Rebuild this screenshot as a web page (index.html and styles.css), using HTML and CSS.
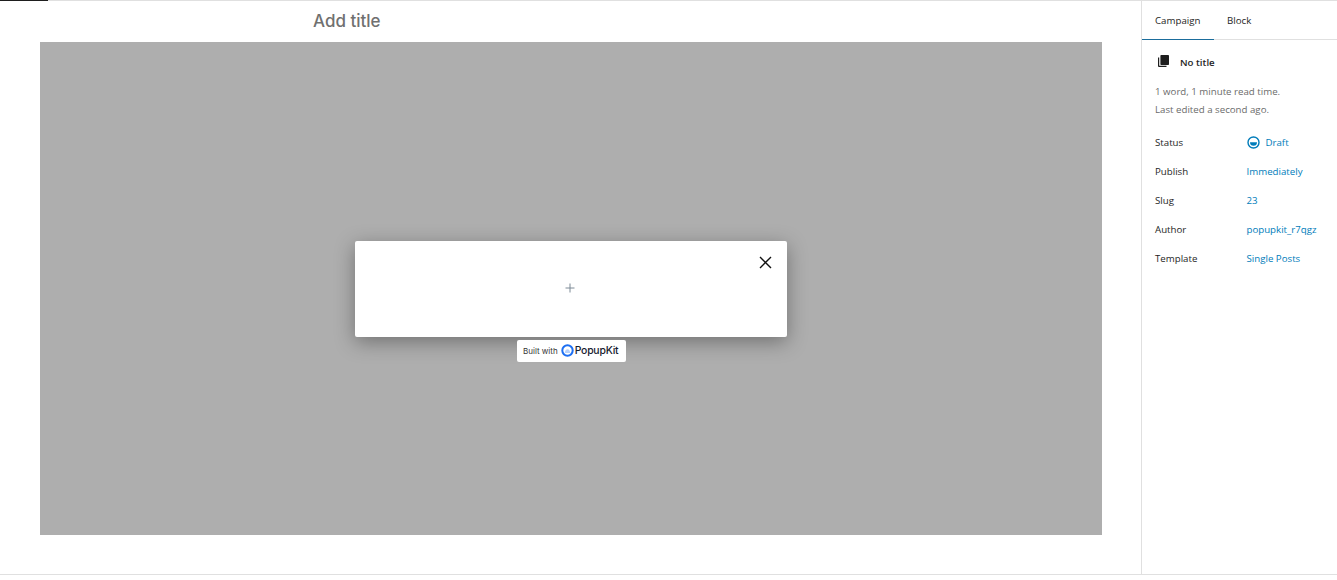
FILE: index.html
```html
<!DOCTYPE html>
<html lang="en">
<head>
<meta charset="utf-8">
<title>Campaign editor</title>
<link rel="stylesheet" href="styles.css">
</head>
<body>
<div class="app">
  <div class="progress"></div>
  <div class="workspace">
    <main class="editor">
      <h1 class="title">Add title</h1>
      <div class="overlay">
        <div class="modal">
          <svg class="close" width="13" height="13" viewBox="0 0 13 13"><path d="M1 1l11 11M12 1L1 12" fill="none" stroke="#111" stroke-width="1.4"/></svg>
          <svg class="plus" width="10" height="10" viewBox="0 0 10 10"><path d="M5 .5v9M.5 5h9" fill="none" stroke="#7d8a96" stroke-width="1"/></svg>
          <div class="badge">
            <span class="built">Built with</span>
            <svg class="logo" width="13" height="13" viewBox="0 0 13 13"><circle cx="6.5" cy="6.5" r="5.2" fill="#fff" stroke="#1d6ff2" stroke-width="2"/><path d="M3.8 9c.1-2 1.2-3.7 2.7-3.7s2.6 1.7 2.7 3.7z" fill="#b5d0fb"/></svg>
            <span class="brand">PopupKit</span>
          </div>
        </div>
      </div>
    </main>
    <aside class="sidebar">
      <nav class="tabs">
        <span class="tab active">Campaign</span>
        <span class="tab">Block</span>
      </nav>
      <div class="panel">
        <div class="doc">
          <svg width="14" height="14" viewBox="0 0 14 14"><path d="M1 3.5h1.2v8.3h7.3V13H2a1 1 0 0 1-1-1z" fill="#1e1e1e"/><rect x="3.4" y="1" width="8.6" height="10" rx=".8" fill="#1e1e1e"/></svg>
          <strong>No title</strong>
        </div>
        <p class="meta">1 word, 1 minute read time.</p>
        <p class="meta">Last edited a second ago.</p>
        <dl class="rows">
          <div class="row"><dt>Status</dt><dd class="status"><svg width="13" height="13" viewBox="0 0 13 13"><circle cx="6.5" cy="6.5" r="5.5" fill="none" stroke="#007cba" stroke-width="1.4"/><path d="M3 6.2h7a3.5 3.5 0 0 1-7 0z" fill="#007cba"/></svg>Draft</dd></div>
          <div class="row"><dt>Publish</dt><dd>Immediately</dd></div>
          <div class="row"><dt>Slug</dt><dd>23</dd></div>
          <div class="row"><dt>Author</dt><dd>popupkit_r7qgz</dd></div>
          <div class="row"><dt>Template</dt><dd>Single Posts</dd></div>
        </dl>
      </div>
    </aside>
  </div>
</div>
</body>
</html>
```
FILE: styles.css
```css
* { box-sizing: border-box; }
html, body { margin: 0; height: 100%; overflow: hidden; background: #fff; }
body { font-family: "Open Sans", "Noto Sans", sans-serif; font-size: 9.7px; color: #1e1e1e; }
.app { height: 575px; display: flex; flex-direction: column; border-bottom: 1px solid #e0e0e0; }
.progress { height: 1px; flex: none; background: linear-gradient(to right, #1e1e1e 48px, #e0e0e0 48px); }
.workspace { flex: 1; display: flex; min-height: 0; }
.editor { width: 1141px; flex: none; display: flex; flex-direction: column; padding: 0 39px 0 40px; }
.title { margin: 9px 0 0 273px; height: 32px; font: 500 17px/22px Inter, sans-serif; color: #707070; }
.overlay { height: 493px; flex: none; background: #aeaeae; display: flex; align-items: center; justify-content: center; }
.modal { position: relative; width: 432px; height: 96px; background: #fff; border-radius: 2px; box-shadow: 0 5px 20px rgba(0,0,0,.35); display: flex; align-items: center; justify-content: center; }
.close { position: absolute; top: 15px; right: 15px; }
.plus { margin: 0 2px 2px 0; }
.badge { position: absolute; top: 99px; left: 162px; width: 109px; height: 22px; background: #fff; border-radius: 2px; display: flex; align-items: center; padding-left: 6px; }
.built { font-size: 8px; color: #333; font-family: Inter, sans-serif; margin-right: 3px; white-space: nowrap; }
.logo { flex: none; margin-right: 1px; }
.brand { font: 500 10.4px/1 Inter, sans-serif; color: #16202e; letter-spacing: -.2px; margin-top: 1px; }
.sidebar { flex: 1; border-left: 1px solid #e0e0e0; }
.tabs { display: flex; height: 39px; border-bottom: 1px solid #e0e0e0; }
.tab { padding: 0 13px; line-height: 40px; white-space: nowrap; }
.tab.active { width: 72px; box-shadow: inset 0 -1px 0 #1b6d9c; margin-bottom: -1px; height: 39px; }
.panel { padding: 12px 13px 0; }
.doc { display: flex; align-items: center; gap: 9px; height: 20px; margin-bottom: 11px; }
.doc svg { flex: none; margin: -2px 0 0 2px; }
.doc strong { font-weight: 600; }
.meta { margin: 0; line-height: 18px; color: #6b6b6b; }
.rows { margin: 9px 0 0; }
.row { display: flex; align-items: center; height: 29px; }
.row dt { width: 91.5px; flex: none; }
.row dd { margin: 0; color: #007cba; white-space: nowrap; display: flex; align-items: center; gap: 6px; }
```
